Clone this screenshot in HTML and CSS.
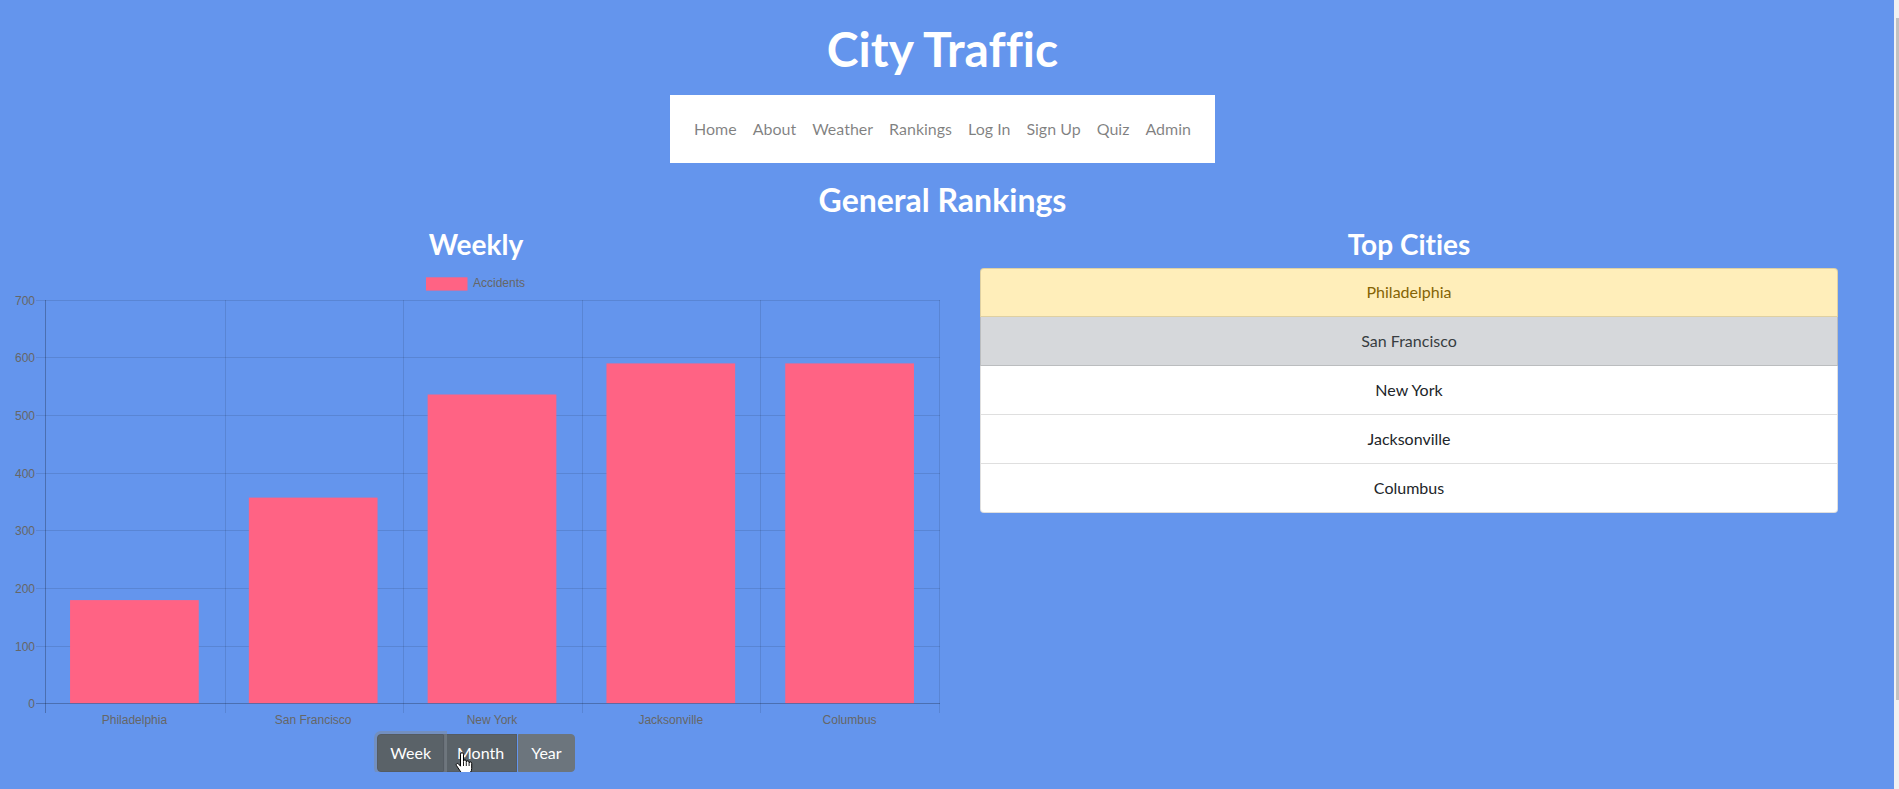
FILE: index.html
```html
<!DOCTYPE html>
<html lang="en">
<head>
<meta charset="utf-8">
<title>City Traffic</title>
<link rel="stylesheet" href="styles.css">
</head>
<body>
<div class="page">
  <h1 class="title">City Traffic</h1>
  <nav class="nav">
    <a class="nav-link">Home</a>
    <a class="nav-link">About</a>
    <a class="nav-link">Weather</a>
    <a class="nav-link">Rankings</a>
    <a class="nav-link">Log In</a>
    <a class="nav-link">Sign Up</a>
    <a class="nav-link">Quiz</a>
    <a class="nav-link">Admin</a>
  </nav>
  <h2 class="section-title">General Rankings</h2>
  <div class="cols">
    <div class="col-left">
      <h3 class="col-title weekly">Weekly</h3>
      <svg class="chart" width="952" height="470" viewBox="0 0 952 470">
        <g class="grid">
          <line x1="36" y1="39.5" x2="940" y2="39.5"/>
          <line x1="36" y1="96.5" x2="940" y2="96.5"/>
          <line x1="36" y1="154.5" x2="940" y2="154.5"/>
          <line x1="36" y1="212.5" x2="940" y2="212.5"/>
          <line x1="36" y1="269.5" x2="940" y2="269.5"/>
          <line x1="36" y1="327.5" x2="940" y2="327.5"/>
          <line x1="36" y1="385.5" x2="940" y2="385.5"/>
          <line x1="225.5" y1="39" x2="225.5" y2="452"/>
          <line x1="403.5" y1="39" x2="403.5" y2="452"/>
          <line x1="582.5" y1="39" x2="582.5" y2="452"/>
          <line x1="760.5" y1="39" x2="760.5" y2="452"/>
          <line x1="939.5" y1="39" x2="939.5" y2="452"/>
        </g>
        <g class="axis">
          <line x1="45.5" y1="39" x2="45.5" y2="452"/>
        </g>
        <g class="bars">
          <rect x="70.05" y="339.1" width="128.7" height="103.1"/>
          <rect x="248.85" y="236.6" width="128.7" height="205.6"/>
          <rect x="427.65" y="133.5" width="128.7" height="308.7"/>
          <rect x="606.45" y="102.4" width="128.7" height="339.8"/>
          <rect x="785.25" y="102.4" width="128.7" height="339.8"/>
        </g>
        <g class="axis">
          <line x1="36" y1="442.5" x2="940" y2="442.5"/>
        </g>
        <g class="ticks-y">
          <text x="35" y="43.8">700</text>
          <text x="35" y="100.8">600</text>
          <text x="35" y="158.8">500</text>
          <text x="35" y="216.8">400</text>
          <text x="35" y="273.8">300</text>
          <text x="35" y="331.8">200</text>
          <text x="35" y="389.8">100</text>
          <text x="35" y="446.8">0</text>
        </g>
        <g class="ticks-x">
          <text x="134.4" y="462.5">Philadelphia</text>
          <text x="313.2" y="462.5">San Francisco</text>
          <text x="492" y="462.5">New York</text>
          <text x="670.8" y="462.5">Jacksonville</text>
          <text x="849.6" y="462.5">Columbus</text>
        </g>
        <rect class="legend-box" x="426" y="16.3" width="41.5" height="13.3"/>
        <text class="legend-text" x="473" y="25.7">Accidents</text>
      </svg>
      <div class="btn-group">
        <button class="btn btn-active btn-focus">Week</button>
        <button class="btn btn-active">Month</button>
        <button class="btn">Year</button>
        <svg class="cursor" width="18" height="23" viewBox="0 0 18 23">
          <path d="M5.5 2.2a1.5 1.5 0 0 1 3 0V9.3a1.4 1.4 0 0 1 2.8 0V10.3a1.4 1.4 0 0 1 2.8 0V11.3a1.3 1.3 0 0 1 2.6 0V16.5c0 3-1.6 5-4.2 5H9.2c-2 0-3-1-4.4-3L1.4 13.4a1.3 1.3 0 0 1 2-1.6L5.5 14.2Z" fill="#fff" stroke="#000" stroke-width="1" stroke-linejoin="round"/>
          <path d="M8.5 9.5V14M11.3 10.5V14M14.1 11.5V14" stroke="#000" stroke-width="0.9" fill="none"/>
        </svg>
      </div>
    </div>
    <div class="col-right">
      <h3 class="col-title">Top Cities</h3>
      <ul class="list">
        <li class="list-item item-warning">Philadelphia</li>
        <li class="list-item item-secondary">San Francisco</li>
        <li class="list-item">New York</li>
        <li class="list-item">Jacksonville</li>
        <li class="list-item">Columbus</li>
      </ul>
    </div>
  </div>
</div>
<div class="scrollbar"><div class="scroll-thumb"></div></div>
</body>
</html>
```

FILE: styles.css
```css
html {
  background: #6495ed;
  overflow: hidden;
}
body {
  margin: 0;
  font-family: Lato, "Open Sans", sans-serif;
  font-variant-ligatures: none;
  color: #212529;
}
.page {
  width: 1885px;
}
.title {
  margin: 20px 0 0;
  font-size: 48px;
  line-height: 58px;
  font-weight: 700;
  color: #fff;
  text-align: center;
}
.nav {
  display: flex;
  width: fit-content;
  margin: 17px auto 0;
  padding: 22px 16px;
  background: #fff;
}
.nav-link {
  padding: 0 8px;
  font-size: 16px;
  line-height: 24px;
  color: rgba(0, 0, 0, 0.5);
}
.section-title {
  margin: 18px 0 0;
  font-size: 32px;
  line-height: 38px;
  font-weight: 700;
  color: #fff;
  text-align: center;
}
.cols {
  display: flex;
  margin-top: 8px;
  align-items: flex-start;
}
.col-left {
  width: 952px;
  display: flex;
  flex-direction: column;
  align-items: center;
}
.col-right {
  width: 858px;
  margin-left: 28px;
}
.col-title {
  margin: 0;
  font-size: 28px;
  line-height: 34px;
  font-weight: 700;
  color: #fff;
  text-align: center;
}
.chart {
  display: block;
  font-family: "Liberation Sans", Arial, sans-serif;
  font-size: 12px;
}
.grid line {
  stroke: rgba(0, 0, 0, 0.1);
  stroke-width: 1;
}
.axis line {
  stroke: rgba(0, 0, 0, 0.25);
  stroke-width: 1;
}
.bars rect,
.legend-box {
  fill: #ff6384;
}
.ticks-y text {
  fill: #666;
  text-anchor: end;
}
.ticks-x text {
  fill: #666;
  text-anchor: middle;
}
.legend-text {
  fill: #666;
}
.btn-group {
  position: relative;
  display: flex;
  margin-top: 3px;
}
.btn {
  font-family: Lato, "Open Sans", sans-serif;
  font-size: 16px;
  line-height: 24px;
  padding: 6px 12px;
  color: #fff;
  background: #6c757d;
  border: 1px solid #6c757d;
  border-radius: 0;
  margin: 0;
}
.btn:first-child {
  border-radius: 4px 0 0 4px;
}
.btn:nth-child(3) {
  border-radius: 0 4px 4px 0;
  margin-left: 1px;
}
.btn-active {
  background: #5a6268;
  border-color: #545b62;
}
.btn-focus {
  position: relative;
  z-index: 1;
  box-shadow: 0 0 0 3px rgba(130, 138, 145, 0.5);
}
.cursor {
  position: absolute;
  left: 78px;
  top: 18px;
  z-index: 2;
}
.list {
  list-style: none;
  margin: 7px 0 0;
  padding: 0;
  border-radius: 4px;
}
.list-item {
  padding: 12px 20px;
  font-size: 16px;
  line-height: 24px;
  text-align: center;
  background: #fff;
  color: #212529;
  border: 1px solid rgba(0, 0, 0, 0.125);
  border-top-width: 0;
}
.list-item:first-child {
  border-top-width: 1px;
  border-radius: 4px 4px 0 0;
  padding-top: 11px;
}
.list-item:last-child {
  border-radius: 0 0 4px 4px;
}
.item-warning {
  background: #ffeeba;
  color: #856404;
}
.item-secondary {
  background: #d6d8db;
  color: #383d41;
}
.scrollbar {
  position: fixed;
  top: 0;
  right: 0;
  width: 5px;
  height: 100vh;
  background: #f1f1f1;
}
.scroll-thumb {
  margin: 18px 0 0 2px;
  width: 3px;
  height: 682px;
  background: #c1c1c1;
}
```
